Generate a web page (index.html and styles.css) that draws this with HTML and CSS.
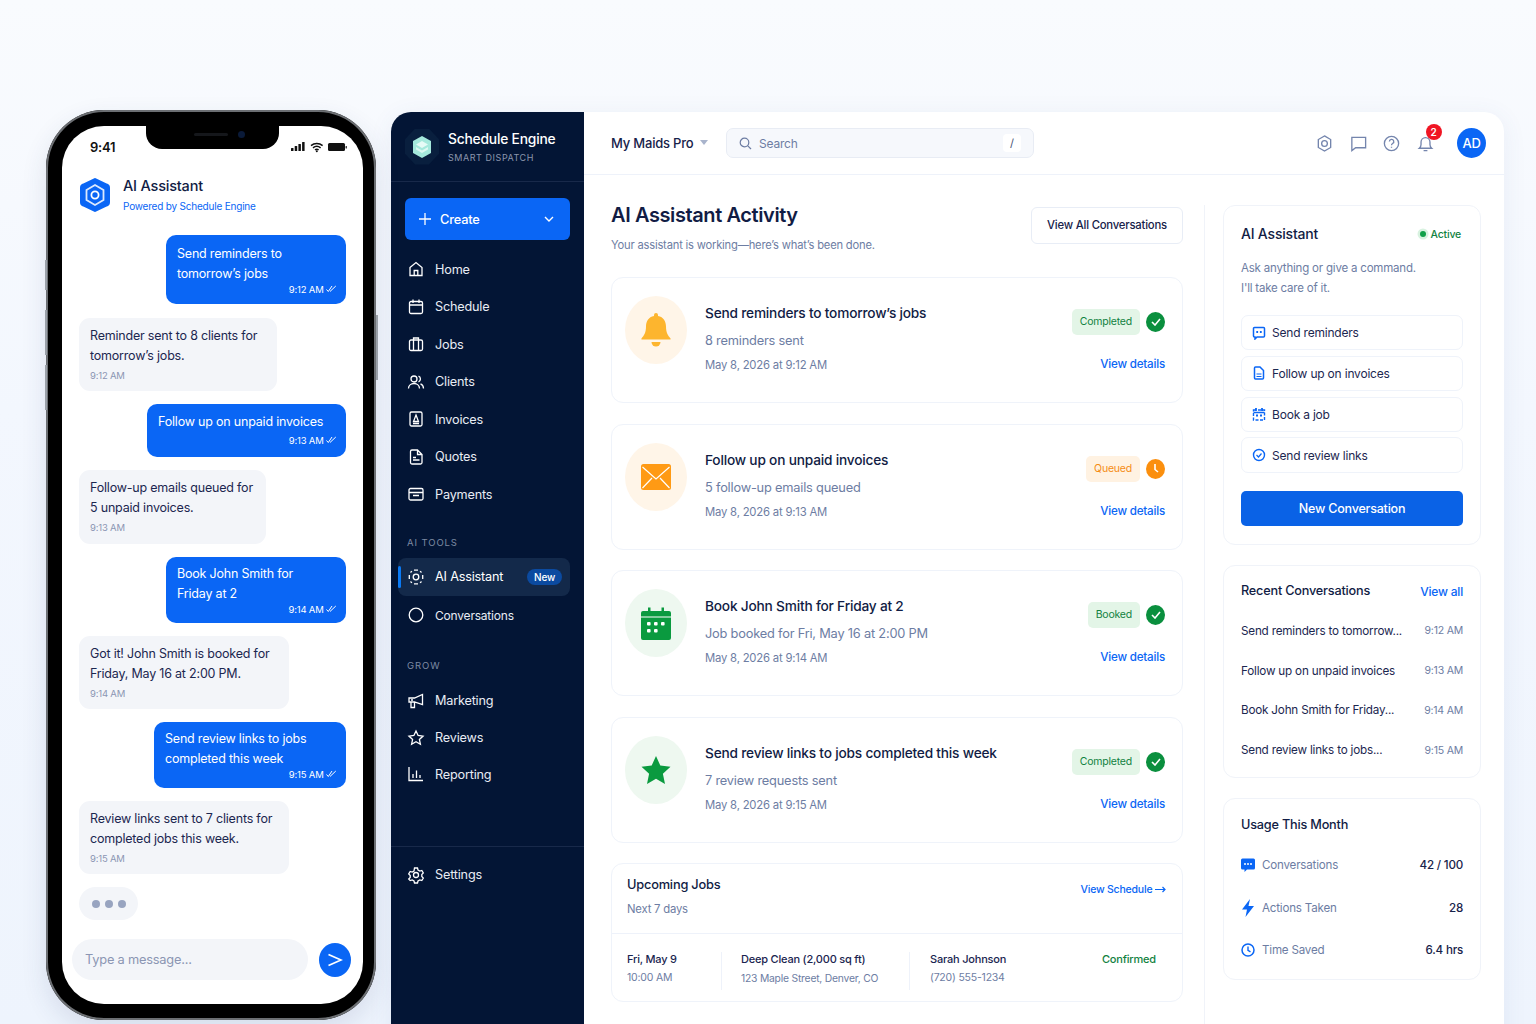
FILE: index.html
```html
<!DOCTYPE html>
<html lang="en">
<head>
<meta charset="utf-8">
<title>Schedule Engine - AI Assistant</title>
<link rel="stylesheet" href="styles.css">
</head>
<body>
<div class="phone">
  <span class="btn-side bs1"></span><span class="btn-side bs2"></span><span class="btn-side bs3"></span><span class="btn-side bs4"></span>
  <div class="screen">
    <div class="notch"><span class="speaker"></span><span class="cam"></span></div>
    <div class="status">
      <span class="clock">9:41</span>
      <svg class="status-icons" width="56" height="12" viewBox="0 0 56 12"><g fill="#111"><rect x="0" y="7" width="2.5" height="3" rx=".5"/><rect x="3.7" y="5" width="2.5" height="5" rx=".5"/><rect x="7.4" y="3" width="2.5" height="7" rx=".5"/><rect x="11.1" y="1" width="2.5" height="9" rx=".5"/><rect x="37" y="2" width="17" height="8" rx="1.5"/><rect x="54.6" y="5" width="1.2" height="2.4" rx=".5"/></g><path d="M20 4.6a9 9 0 0 1 11.6 0M22 6.8a6 6 0 0 1 7.6 0M24 8.9a3 3 0 0 1 3.6 0" fill="none" stroke="#111" stroke-width="1.5"/><circle cx="25.8" cy="10.3" r="1" fill="#111"/></svg>
    </div>
    <div class="p-head">
      <svg width="32" height="36" viewBox="0 0 32 36"><path d="M16 2.500l11.500 5.500a3 3 0 0 1 2 2.800v14.400a3 3 0 0 1-2 2.800L16 33.500 4.500 28a3 3 0 0 1-2-2.800V10.800a3 3 0 0 1 2-2.800z" fill="#0a66f5" stroke="#0a66f5" stroke-width="3" stroke-linejoin="round"/><path d="M16 8l8.500 5v10L16 28l-8.500-5V13z" fill="none" stroke="#fff" stroke-width="1.800" opacity=".85"/><circle cx="16" cy="18" r="3.600" fill="none" stroke="#fff" stroke-width="1.800"/></svg>
      <div class="p-head-t"><div class="p-title">AI Assistant</div><div class="p-sub">Powered by Schedule Engine</div></div>
    </div>
    <div class="chat">
      <div class="bub me h69 w180"><p>Send reminders to<br>tomorrow’s jobs</p><div class="stamp">9:12 AM <svg width="11" height="8" viewBox="0 0 11 8"><path d="M.5 4.500l1.800 2L6 1M4 6.500L9.800 1" fill="none" stroke="#fff" stroke-width="1"/></svg></div></div>
      <div class="bub ai h73 w198"><p>Reminder sent to 8 clients for<br>tomorrow’s jobs.</p><div class="stamp">9:12 AM</div></div>
      <div class="bub me h53 w199"><p>Follow up on unpaid invoices</p><div class="stamp">9:13 AM <svg width="11" height="8" viewBox="0 0 11 8"><path d="M.5 4.500l1.800 2L6 1M4 6.500L9.800 1" fill="none" stroke="#fff" stroke-width="1"/></svg></div></div>
      <div class="bub ai h74 w187"><p>Follow-up emails queued for<br>5 unpaid invoices.</p><div class="stamp">9:13 AM</div></div>
      <div class="bub me h66 w180"><p>Book John Smith for<br>Friday at 2</p><div class="stamp">9:14 AM <svg width="11" height="8" viewBox="0 0 11 8"><path d="M.5 4.500l1.800 2L6 1M4 6.500L9.800 1" fill="none" stroke="#fff" stroke-width="1"/></svg></div></div>
      <div class="bub ai h73 w210"><p>Got it! John Smith is booked for<br>Friday, May 16 at 2:00 PM.</p><div class="stamp">9:14 AM</div></div>
      <div class="bub me h66 w192"><p>Send review links to jobs<br>completed this week</p><div class="stamp">9:15 AM <svg width="11" height="8" viewBox="0 0 11 8"><path d="M.5 4.500l1.800 2L6 1M4 6.500L9.800 1" fill="none" stroke="#fff" stroke-width="1"/></svg></div></div>
      <div class="bub ai h73 w210"><p>Review links sent to 7 clients for<br>completed jobs this week.</p><div class="stamp">9:15 AM</div></div>
      <div class="typing"><i></i><i></i><i></i></div>
    </div>
    <div class="composer">
      <div class="msg-input">Type a message...</div>
      <div class="send"><svg width="16" height="14" viewBox="0 0 16 14"><path d="M1.500 1.500L14 7 1.500 12.500" fill="none" stroke="#fff" stroke-width="1.800"/></svg></div>
    </div>
  </div>
</div>

<div class="app">
  <aside class="side">
    <div class="brand">
      <div class="brand-mark"><svg width="20" height="24" viewBox="0 0 20 24"><path d="M10 1l9 5v12l-9 5-9-5V6z" fill="#a5e9dc"/><path d="M10 6l6 3.400L10 13 4 9.400z" fill="#e6fbf6"/><path d="M4 12l6 3.500 6-3.500v2.500L10 18l-6-3.500z" fill="#e6fbf6" opacity=".85"/></svg></div>
      <div><div class="brand-name">Schedule Engine</div><div class="brand-sub">SMART DISPATCH</div></div>
    </div>
    <div class="create"><svg width="14" height="14" viewBox="0 0 14 14"><path d="M7 1v12M1 7h12" stroke="#fff" stroke-width="1.300"/></svg><span>Create</span><svg class="chev" width="10" height="6" viewBox="0 0 10 6"><path d="M1 1l4 4 4-4" fill="none" stroke="#fff" stroke-width="1.400"/></svg></div>
    <nav class="nav first">
      <a class="nav-i"><svg viewBox="0 0 18 18"><path d="M3 7.500L9 2.500l6 5v8H3zM7.200 15.500v-5h3.600v5"/></svg>Home</a>
      <a class="nav-i"><svg viewBox="0 0 18 18"><rect x="2.500" y="3.500" width="13" height="12" rx="1.500"/><path d="M2.500 7h13M6 1.500v3.500M12 1.500v3.500"/></svg>Schedule</a>
      <a class="nav-i"><svg viewBox="0 0 18 18"><rect x="2.500" y="5" width="13" height="10.500" rx="1.500"/><path d="M6.500 15.500V3h5v12.500"/></svg>Jobs</a>
      <a class="nav-i"><svg viewBox="0 0 18 18"><circle cx="7" cy="6" r="3"/><path d="M1.500 15.500c0-3 2.500-5 5.500-5s5.500 2 5.500 5M11.500 3.200a3 3 0 0 1 0 5.600M13.500 10.800c1.800.7 3 2.300 3 4.700"/></svg>Clients</a>
      <a class="nav-i"><svg viewBox="0 0 18 18"><rect x="3" y="2" width="12" height="14" rx="1.500"/><path d="M9 5l2.500 6.500h-5zM6 13.500h6"/></svg>Invoices</a>
      <a class="nav-i"><svg viewBox="0 0 18 18"><path d="M3.500 3.500a1.500 1.500 0 0 1 1.500-1.500h5.500L15 6.500V14.500a1.500 1.500 0 0 1-1.500 1.500H5a1.500 1.500 0 0 1-1.500-1.500zM10.500 2v4.500H15M6 9.500h3M6 12h6.500"/></svg>Quotes</a>
      <a class="nav-i"><svg viewBox="0 0 18 18"><rect x="2" y="3.500" width="14" height="11.500" rx="1.500"/><path d="M2 7.500h14M6 10.500h6"/></svg>Payments</a>
    </nav>
    <div class="nav-head aitools">AI TOOLS</div>
    <nav class="nav">
      <a class="nav-i current"><svg viewBox="0 0 18 18"><circle cx="9" cy="9" r="2.800"/><path d="M7 2.200h4M7 15.800h4M2.300 7v4M15.700 7v4M3.500 4.500l1.400-1.400M13.100 3.100l1.400 1.400M3.500 13.500l1.400 1.400M13.100 14.900l1.400-1.400"/></svg>AI Assistant<span class="new">New</span></a>
      <a class="nav-i conv"><svg viewBox="0 0 18 18"><circle cx="9" cy="9" r="6.800"/></svg>Conversations</a>
    </nav>
    <div class="nav-head grow">GROW</div>
    <nav class="nav tight">
      <a class="nav-i"><svg viewBox="0 0 18 18"><path d="M2 6h5.500L15.500 2.500v10L7.500 10H2zM4 10v5.500h3.500V10M4 8h2"/></svg>Marketing</a>
      <a class="nav-i"><svg viewBox="0 0 18 18"><path d="M9 2l2.100 4.500 4.900.6-3.600 3.300 1 4.800L9 12.800l-4.400 2.400 1-4.800L2 7.100l4.900-.6z"/></svg>Reviews</a>
      <a class="nav-i"><svg viewBox="0 0 18 18"><path d="M2 2v13.500h14M6 13V9M9.500 13V5.500M13 13v-3"/></svg>Reporting</a>
    </nav>
    <div class="side-foot">
      <a class="nav-i"><svg viewBox="0 0 18 18"><circle cx="9" cy="9" r="2.500"/><path d="M7.500 2h3l.5 2 1.800 1 2-.6 1.500 2.600-1.500 1.500v2l1.500 1.500-1.500 2.600-2-.6-1.800 1-.5 2h-3l-.5-2-1.800-1-2 .6L1.700 13l1.500-1.500v-2L1.700 8l1.500-2.600 2 .6L7 5z"/></svg>Settings</a>
    </div>
  </aside>

  <div class="content">
    <header class="top">
      <div class="org">My Maids Pro <svg width="8" height="5" viewBox="0 0 8 5"><path d="M0 0h8L4 5z" fill="#a9b4cc"/></svg></div>
      <div class="search"><svg width="13" height="13" viewBox="0 0 13 13"><circle cx="5.500" cy="5.500" r="4.300" fill="none" stroke="#6d7da3" stroke-width="1.200"/><path d="M8.800 8.800L12 12" stroke="#6d7da3" stroke-width="1.200"/></svg><span>Search</span><kbd>/</kbd></div>
      <div class="top-icons">
        <svg class="ti" viewBox="0 0 20 20"><path d="M10 2l6.500 3.800v8.400L10 18l-6.500-3.800V5.800z"/><circle cx="10" cy="10" r="3"/></svg>
        <svg class="ti" viewBox="0 0 20 20"><path d="M3 3.500h14.500v11H7L3 17.500z"/></svg>
        <svg class="ti" viewBox="0 0 20 20"><circle cx="10" cy="10" r="7.500"/><path d="M7.800 8a2.300 2.300 0 1 1 3.400 2c-.8.500-1.200.9-1.200 1.800M10 13.500v1"/></svg>
        <div class="bell"><svg class="ti" viewBox="0 0 20 20"><path d="M3.500 15h13c-1.200-1-1.800-2-1.800-4V8.500a4.700 4.700 0 0 0-9.400 0V11c0 2-.6 3-1.800 4zM8 17.500h4"/></svg><span class="dot">2</span></div>
      </div>
      <div class="avatar">AD</div>
    </header>

    <div class="body">
      <main class="mid">
        <div class="mid-head">
          <div><h1>AI Assistant Activity</h1><p class="lead">Your assistant is working—here’s what’s been done.</p></div>
          <div class="btn-out">View All Conversations</div>
        </div>

        <article class="act">
          <div class="circ orange"><svg width="30" height="36" viewBox="0 0 30 36"><path d="M15 1a2 2 0 0 1 2 2v1c5.500 1 8 5.500 8 10.500 0 6 2 9 4.500 12a.6.6 0 0 1-.5 1H1a.6.6 0 0 1-.5-1C3 23.500 5 20.500 5 14.500 5 9.500 7.500 5 13 4V3a2 2 0 0 1 2-2z" fill="#fdb52e"/><path d="M10.500 30h9a4.500 4.500 0 0 1-9 0z" fill="#fdb52e"/></svg></div>
          <div class="act-t"><h3>Send reminders to tomorrow’s jobs</h3><p class="s1">8 reminders sent</p><p class="s2">May 8, 2026 at 9:12 AM</p></div>
          <div class="act-r"><div class="st"><span class="pill g">Completed</span><span class="stc gc"><svg width="10" height="8" viewBox="0 0 10 8"><path d="M1 4l3 3 5-6" fill="none" stroke="#fff" stroke-width="1.600"/></svg></span></div><a class="vd">View details</a></div>
        </article>

        <article class="act">
          <div class="circ orange"><svg width="30" height="26" viewBox="0 0 30 26"><rect width="30" height="26" rx="2.500" fill="#ff9a14"/><path d="M1.500 3L15 15 28.500 3M1.500 24l9.500-10M28.500 24L19 14" fill="none" stroke="#fff" stroke-width="1.200"/></svg></div>
          <div class="act-t"><h3>Follow up on unpaid invoices</h3><p class="s1">5 follow-up emails queued</p><p class="s2">May 8, 2026 at 9:13 AM</p></div>
          <div class="act-r"><div class="st"><span class="pill o">Queued</span><span class="stc oc"><svg width="10" height="11" viewBox="0 0 10 11"><path d="M4 1v5.500l3 2.500" fill="none" stroke="#fff" stroke-width="1.600"/></svg></span></div><a class="vd">View details</a></div>
        </article>

        <article class="act">
          <div class="circ green"><svg width="30" height="34" viewBox="0 0 30 34"><path d="M2 5h5V1.500h2.500V5h11V1.500H23V5h5a2 2 0 0 1 2 2v25a2 2 0 0 1-2 2H2a2 2 0 0 1-2-2V7a2 2 0 0 1 2-2z" fill="#0a9a3f"/><path d="M0 11h30" stroke="#fff" stroke-width="1"/><g fill="#fff"><rect x="6" y="16" width="3.600" height="3.600" rx="1"/><rect x="13" y="16" width="3.600" height="3.600" rx="1"/><rect x="20" y="16" width="3.600" height="3.600" rx="1"/><rect x="6" y="23" width="3.600" height="3.600" rx="1"/><rect x="13" y="23" width="3.600" height="3.600" rx="1"/></g></svg></div>
          <div class="act-t"><h3>Book John Smith for Friday at 2</h3><p class="s1">Job booked for Fri, May 16 at 2:00 PM</p><p class="s2">May 8, 2026 at 9:14 AM</p></div>
          <div class="act-r"><div class="st"><span class="pill g">Booked</span><span class="stc gc"><svg width="10" height="8" viewBox="0 0 10 8"><path d="M1 4l3 3 5-6" fill="none" stroke="#fff" stroke-width="1.600"/></svg></span></div><a class="vd">View details</a></div>
        </article>

        <article class="act">
          <div class="circ green"><svg width="30" height="30" viewBox="0 0 30 30"><path d="M15 1l4.300 9.500 10.200 1.200-7.600 7 2.100 10.300L15 23.700 6 29l2.100-10.300-7.600-7 10.200-1.200z" fill="#0a9a3f"/></svg></div>
          <div class="act-t"><h3>Send review links to jobs completed this week</h3><p class="s1">7 review requests sent</p><p class="s2">May 8, 2026 at 9:15 AM</p></div>
          <div class="act-r"><div class="st"><span class="pill g">Completed</span><span class="stc gc"><svg width="10" height="8" viewBox="0 0 10 8"><path d="M1 4l3 3 5-6" fill="none" stroke="#fff" stroke-width="1.600"/></svg></span></div><a class="vd">View details</a></div>
        </article>

        <section class="up">
          <div class="up-head">
            <div><h3>Upcoming Jobs</h3><p class="up-sub">Next 7 days</p></div>
            <a class="vs">View Schedule <svg width="11" height="7" viewBox="0 0 11 7"><path d="M0 3.500h10M7.500 1L10 3.500 7.500 6" fill="none" stroke="#0a66f5" stroke-width="1.200"/></svg></a>
          </div>
          <div class="up-row">
            <div class="uc c1"><b>Fri, May 9</b><span>10:00 AM</span></div>
            <div class="uc c2"><b>Deep Clean (2,000 sq ft)</b><span>123 Maple Street, Denver, CO</span></div>
            <div class="uc c3"><b>Sarah Johnson</b><span>(720) 555-1234</span></div>
            <div class="conf">Confirmed</div>
          </div>
        </section>
      </main>

      <aside class="right">
        <section class="panel p1">
          <div class="ph"><h2>AI Assistant</h2><span class="live"><i></i>Active</span></div>
          <p class="desc">Ask anything or give a command.<br>I'll take care of it.</p>
          <div class="quick">
            <div class="q"><svg viewBox="0 0 14 14" class="qi"><path d="M1.500 2.500a1 1 0 0 1 1-1h9a1 1 0 0 1 1 1v7.500a1 1 0 0 1-1 1H5L3 13v-2h-.5a1 1 0 0 1-1-1z" fill="none" stroke="#0a66f5" stroke-width="1.500"/><rect x="4.300" y="5" width="1.800" height="2" fill="#0a66f5"/><rect x="7.900" y="5" width="1.800" height="2" fill="#0a66f5"/></svg>Send reminders</div>
            <div class="q"><svg viewBox="0 0 14 14" class="qi"><path d="M2.500 2a1 1 0 0 1 1-1H8l3.500 3.500V12a1 1 0 0 1-1 1h-7a1 1 0 0 1-1-1z" fill="none" stroke="#0a66f5" stroke-width="1.500"/><path d="M4.500 8h5M4.500 10.500h5" stroke="#0a66f5" stroke-width="1.200"/></svg>Follow up on invoices</div>
            <div class="q"><svg viewBox="0 0 14 14" class="qi"><path d="M4 1v3M10 1v3M1.500 3h11v10h-11z" fill="none" stroke="#0a66f5" stroke-width="1.400" stroke-dasharray="3 1.500"/><path d="M4 1v3M10 1v3M1.500 5.500h11" stroke="#0a66f5" stroke-width="1.300"/><rect x="4" y="7.500" width="2" height="2" fill="#0a66f5"/><rect x="8" y="7.500" width="2" height="2" fill="#0a66f5"/></svg>Book a job</div>
            <div class="q"><svg viewBox="0 0 14 14" class="qi"><circle cx="7" cy="7" r="5.500" fill="none" stroke="#0a66f5" stroke-width="1.400"/><path d="M4.500 7l2 2 3-3.500" fill="none" stroke="#0a66f5" stroke-width="1.200"/></svg>Send review links</div>
          </div>
          <div class="btn-new">New Conversation</div>
        </section>

        <section class="panel p2">
          <div class="ph2"><h2>Recent Conversations</h2><a>View all</a></div>
          <div class="rc"><span>Send reminders to tomorrow...</span><em>9:12 AM</em></div>
          <div class="rc"><span>Follow up on unpaid invoices</span><em>9:13 AM</em></div>
          <div class="rc"><span>Book John Smith for Friday...</span><em>9:14 AM</em></div>
          <div class="rc"><span>Send review links to jobs...</span><em>9:15 AM</em></div>
        </section>

        <section class="panel p3">
          <h2>Usage This Month</h2>
          <div class="us"><svg viewBox="0 0 14 14" class="qi"><path d="M0 2a1.500 1.500 0 0 1 1.500-1.500h11A1.500 1.500 0 0 1 14 2v8a1.500 1.500 0 0 1-1.500 1.500H6L3.500 14v-2.500h-2A1.500 1.500 0 0 1 0 10z" fill="#0a66f5"/><g fill="#fff"><circle cx="4" cy="6" r="1"/><circle cx="7" cy="6" r="1"/><circle cx="10" cy="6" r="1"/></g></svg><span>Conversations</span><b>42 / 100</b></div>
          <div class="us"><svg viewBox="0 0 14 18" class="qi tall"><path d="M9 0L1 10.500h5L4.500 18 13 7H7.500z" fill="#0a66f5"/></svg><span>Actions Taken</span><b>28</b></div>
          <div class="us"><svg viewBox="0 0 14 14" class="qi"><circle cx="7" cy="7" r="6" fill="none" stroke="#0a66f5" stroke-width="1.500"/><path d="M7 3.500V7.300l2.500 1.500" fill="none" stroke="#0a66f5" stroke-width="1.400"/></svg><span>Time Saved</span><b>6.4 hrs</b></div>
        </section>
      </aside>
    </div>
  </div>
</div>
</body>
</html>
```

FILE: styles.css
```css
* { box-sizing: border-box; }
html, body { margin: 0; height: 1024px; }
body {
  display: flex; align-items: flex-start; overflow: hidden;
  padding: 110px 0 0 46px;
  font-family: Inter, "Liberation Sans", sans-serif;
  font-size: 12.500px; color: #17224a; letter-spacing: -.2px;
  background: linear-gradient(180deg, #f9fbfe 0, #f3f7fe 40%, #eef4fd 100%);
}
h1, h2, h3, p { margin: 0; }
a { color: inherit; }

/* Phone */
.phone {
  position: relative; flex: none; width: 330px; height: 910px; padding: 16px 13px 16px 16px;
  border-radius: 58px; background: #000;
  box-shadow: inset 0 0 0 2px #6c6f73, 0 10px 26px rgba(40,60,110,.12);
}
.btn-side { position: absolute; width: 2px; background: #9aa0a8; }
.bs1 { left: -1px; top: 150px; height: 30px; }
.bs2 { left: -1px; top: 200px; height: 45px; }
.bs3 { left: -1px; top: 255px; height: 45px; }
.bs4 { right: -2px; top: 205px; height: 65px; }
.screen {
  position: relative; height: 878px; background: #fff; border-radius: 42px; overflow: hidden;
  display: flex; flex-direction: column;
}
.notch {
  position: absolute; left: 84px; top: 0; width: 133px; height: 23px; background: #000;
  border-radius: 0 0 16px 16px; display: flex; justify-content: center; align-items: center; gap: 10px; padding: 0 0 6px 14px;
}
.speaker { width: 34px; height: 3px; border-radius: 2px; background: #15171b; }
.cam { width: 7px; height: 7px; border-radius: 50%; background: #0a1a38; }
.status { display: flex; justify-content: space-between; align-items: center; height: 20px; margin-top: 11px; padding: 0 16px 0 28px; }
.clock { font-weight: 600; font-size: 13px; color: #111; }
.status-icons { display: block; }
.p-head { display: flex; align-items: center; gap: 12px; margin-top: 19px; padding-left: 17px; height: 37px; }
.p-head svg { flex: none; width: 32px; height: 36px; }
.p-title { font-size: 14.500px; font-weight: 500; color: #111c44; line-height: 18px; }
.p-sub { font-size: 10px; color: #0a66f5; line-height: 14px; margin-top: 4px; }
.chat { display: flex; flex-direction: column; gap: 13px; margin-top: 22px; padding: 0 17px; }
.bub { padding: 8px 11px 0; border-radius: 11px; font-size: 12.500px; line-height: 20px; }
.bub p { margin: 0; }
.me { align-self: flex-end; background: #0a66f5; color: #fff; border-radius: 10px; }
.ai { align-self: flex-start; background: #f3f5f9; color: #1c2750; }
.h69 { height: 69px; padding-top: 9px; margin-bottom: 1px; }
.h73 { height: 73px; }
.h53 { height: 53px; padding-top: 8px; }
.h74 { height: 74px; }
.h66 { height: 66px; padding-top: 7px; }
.w180 { width: 180px; } .w198 { width: 198px; } .w199 { width: 199px; } .w187 { width: 187px; } .w210 { width: 210px; } .w192 { width: 192px; }
.stamp { font-size: 9.500px; line-height: 12px; margin-top: 4px; color: #8b96b3; letter-spacing: -.2px; }
.me .stamp { text-align: right; color: #fff; margin-right: -2px; }
.h69 .stamp { margin-top: 0; }
.h53 .stamp { margin-top: 3px; }
.h66 .stamp { margin-top: 0; }
.typing { align-self: flex-start; display: flex; align-items: center; gap: 5px; width: 59px; height: 33px; padding-left: 13px; border-radius: 17px; background: #f3f5f9; }
.typing i { width: 8px; height: 8px; border-radius: 50%; background: #98a4c0; }
.composer { display: flex; align-items: center; gap: 11px; margin-top: 19px; padding-left: 10px; }
.msg-input { width: 236px; height: 41px; padding-left: 13px; border-radius: 21px; background: #f3f5f9; color: #8b96b3; font-size: 12.800px; line-height: 41px; }
.send { width: 32px; height: 34px; border-radius: 50%; background: #0a66f5; display: flex; align-items: center; justify-content: center; }

/* App */
.app {
  flex: none; display: flex; width: 1113px; height: 960px; margin: 2px 0 0 15px;
  background: #fff; border-radius: 20px; overflow: hidden;
  box-shadow: 0 4px 24px rgba(60,90,150,.08);
}
.side { flex: none; width: 193px; display: flex; flex-direction: column; background: #031535; color: #f0f3f9; }
.brand { display: flex; align-items: center; gap: 9px; height: 70px; padding: 0 0 0 14px; border-bottom: 1px solid #18294a; }
.brand-mark { width: 34px; height: 36px; display: flex; align-items: center; justify-content: center; background: #091f3e; clip-path: polygon(30% 0, 70% 0, 100% 30%, 100% 70%, 70% 100%, 30% 100%, 0 70%, 0 30%); }
.brand-name { font-size: 13.800px; font-weight: 500; color: #fff; line-height: 18px; margin-top: 1px; }
.brand-sub { font-size: 9px; letter-spacing: .55px; color: #8b96ad; line-height: 12px; margin-top: 4px; }
.create { display: flex; align-items: center; gap: 8px; margin: 16px 14px 0; height: 42px; padding: 0 16px 0 13px; border-radius: 6px; background: #0a66f5; color: #fff; font-size: 12.800px; font-weight: 500; }
.chev { margin-left: auto; }
.nav { display: flex; flex-direction: column; padding: 0 14px 0 7px; }
.nav.first { margin-top: 10.500px; }
.nav-i { display: flex; align-items: center; gap: 10px; height: 37.500px; padding-left: 9px; border-radius: 8px; font-size: 12.700px; color: #e8ecf4; }
.nav-i svg { flex: none; width: 18px; height: 18px; fill: none; stroke: #fff; stroke-width: 1.300; }
.nav-head { padding-left: 16px; font-size: 9.500px; letter-spacing: .9px; color: #7d8aa3; line-height: 12px; }
.aitools { margin-top: 24px; margin-bottom: 9px; }
.current { position: relative; background: #13294a; color: #fff; }
.current::before { content: ""; position: absolute; left: 0; top: 8px; bottom: 8px; width: 3px; border-radius: 2px; background: #0a7af5; }
.conv { margin-top: 1px; font-size: 12px; }
.new { margin-left: auto; margin-right: 8px; padding: 0 7px; height: 16px; line-height: 16px; border-radius: 9px; background: #0b4aa0; color: #fff; font-size: 10px; font-weight: 500; }
.grow { margin-top: 25.500px; margin-bottom: 11px; }
.tight .nav-i { height: 36.800px; }
.side-foot { margin-top: 53px; padding: 9px 14px 0 7px; border-top: 1px solid #18294a; }

.content { flex: 1; display: flex; flex-direction: column; min-width: 0; }
.top { flex: none; display: flex; align-items: center; height: 63px; padding: 0 18px 0 27px; border-bottom: 1px solid #eef2fa; }
.org { display: flex; align-items: center; gap: 6px; width: 115px; font-size: 13px; font-weight: 500; color: #17224a; margin-top: -1px; }
.search { display: flex; align-items: center; gap: 7px; width: 308px; height: 30px; padding: 0 12px; border: 1px solid #e8ecf4; border-radius: 7px; background: #f6f8fc; color: #6d7da3; font-size: 12px; }
.search kbd { margin-left: auto; width: 18px; height: 18px; text-align: center; border-radius: 4px; background: #fff; font: 11px/18px Inter, sans-serif; color: #444f73; }
.top-icons { display: flex; align-items: center; gap: 14.500px; margin-left: auto; margin-right: 22.500px; }
.ti { display: block; width: 19px; height: 19px; fill: none; stroke: #7485ad; stroke-width: 1.400; }
.bell { position: relative; }
.dot { position: absolute; top: -10px; left: 10px; width: 16px; height: 16px; border-radius: 50%; background: #f01523; color: #fff; font-size: 10px; font-weight: 600; line-height: 16px; text-align: center; }
.avatar { width: 29px; height: 30px; border-radius: 50%; background: #0a66f5; color: #fff; font-size: 13px; font-weight: 500; line-height: 30px; text-align: center; }

.body { flex: 1; display: flex; min-height: 0; padding: 29px 23px 0 27px; }
.mid { flex: none; width: 572px; display: flex; flex-direction: column; }
.mid-head { display: flex; justify-content: space-between; align-items: flex-start; height: 70px; margin-top: 3px; }
h1 { font-size: 20px; font-weight: 600; color: #111c44; line-height: 26px; letter-spacing: -.4px; margin-top: -5px; }
.lead { margin-top: 9px; font-size: 11.200px; color: #6d7da3; line-height: 16px; }
.btn-out { height: 37px; width: 152px; text-align: center; border: 1px solid #e8edf6; border-radius: 6px; line-height: 35px; font-size: 11.300px; font-weight: 500; color: #17224a; background: #fff; }
.act { display: grid; grid-template-columns: 62px 1fr auto; column-gap: 18px; height: 126px; margin-bottom: 20.500px; padding: 18px 17px 0 13px; border: 1px solid #eff3fa; border-radius: 12px; background: #fff; }
.circ { width: 62px; height: 68px; border-radius: 50%; display: flex; align-items: center; justify-content: center; }
.orange { background: #fff5e8; }
.green { background: #eef8f0; }
.act-t h3 { margin-top: 8px; font-size: 13.700px; font-weight: 500; color: #111c44; line-height: 18px; }
.s1 { margin-top: 10px; font-size: 12.800px; color: #6d7da3; line-height: 18px; }
.s2 { margin-top: 6px; font-size: 11.300px; color: #6d7da3; line-height: 18px; }
.act-r { display: flex; flex-direction: column; align-items: flex-end; }
.st { display: flex; align-items: center; gap: 6px; margin-top: 13px; }
.pill { height: 26px; padding: 0 8px; border-radius: 5px; line-height: 26px; font-size: 10.500px; }
.pill.g { background: #e3f5e7; color: #11823f; }
.pill.o { background: #fff2e2; color: #f58c14; }
.stc { width: 19px; height: 20px; border-radius: 50%; display: flex; align-items: center; justify-content: center; }
.gc { background: #0a8f3e; }
.oc { background: #fb8f0e; }
.vd { margin-top: 20px; font-size: 11.600px; font-weight: 500; color: #0a66f5; line-height: 18px; }
.up { height: 139px; border: 1px solid #eff3fa; border-radius: 12px; background: #fff; }
.up-head { display: flex; justify-content: space-between; height: 70px; padding: 12px 16px 0 15px; border-bottom: 1px solid #eef2fa; }
.up-head h3 { font-size: 12.800px; font-weight: 500; color: #111c44; line-height: 18px; }
.up-sub { margin-top: 7px; font-size: 11.300px; color: #6d7da3; line-height: 16px; }
.vs { margin-top: 7px; font-size: 10.500px; font-weight: 500; color: #0a66f5; line-height: 14px; }
.up-row { display: flex; padding: 18px 0 0 15px; }
.uc { display: flex; flex-direction: column; gap: 5px; height: 38px; border-right: 1px solid #eef2fa; }
.uc b { font-weight: 500; font-size: 11px; line-height: 14px; color: #1a2550; }
.uc span { font-size: 10.500px; line-height: 14px; color: #6d7da3; }
.c1 { width: 95px; }
.c2 { width: 188px; padding-left: 19px; }
.c2 span { font-size: 10.300px; }
.c3 { width: 172px; padding-left: 20px; border-right: 0; }
.conf { margin-left: 20px; font-size: 11px; font-weight: 500; color: #11823f; line-height: 14px; }

.right { flex: none; width: 279px; margin: 1px 0 0 21px; padding-left: 18px; border-left: 1px solid #f0f3f9; display: flex; flex-direction: column; gap: 20px; }
.panel { width: 258px; padding: 0 17px; border: 1px solid #f0f3f9; border-radius: 12px; background: #fff; }
.panel h2 { font-size: 12.700px; font-weight: 500; color: #111c44; line-height: 18px; }
.p1 { height: 340px; padding-top: 19px; }
.p2 { height: 213px; padding-top: 16px; }
.p3 { height: 182px; padding-top: 17px; }
.ph { display: flex; justify-content: space-between; align-items: center; margin-right: 2px; }
.panel .ph h2 { font-size: 14px; }
.live { display: flex; align-items: center; gap: 5px; font-size: 10.500px; font-weight: 500; color: #11823f; }
.live i { width: 6px; height: 6px; border-radius: 50%; background: #11a04a; box-shadow: 0 0 0 2.500px #d8f2e0; }
.desc { margin-top: 15px; font-size: 11.500px; line-height: 20px; color: #6d7da3; }
.quick { display: flex; flex-direction: column; gap: 5.500px; margin-top: 17px; }
.q { display: flex; align-items: center; gap: 6px; height: 35.300px; padding-left: 10px; border: 1px solid #eff3fa; border-radius: 7px; font-size: 12px; color: #1c2750; }
.qi { flex: none; width: 14px; height: 14px; }
.qi.tall { height: 18px; }
.btn-new { margin-top: 18px; height: 35px; border-radius: 5px; background: #0a62e6; color: #fff; text-align: center; line-height: 35px; font-size: 12.500px; font-weight: 500; }
.ph2 { display: flex; justify-content: space-between; align-items: center; margin-bottom: 11px; }
.ph2 a { font-size: 12px; font-weight: 500; color: #0a66f5; }
.rc { display: flex; justify-content: space-between; align-items: center; height: 39.800px; font-size: 11.700px; color: #1c2750; }
.rc em { font-style: normal; font-size: 10.500px; color: #6d7da3; }
.us { display: flex; align-items: center; gap: 7px; height: 42.700px; font-size: 11.600px; color: #6d7da3; }
.p3 h2 { margin-bottom: 9.500px; }
.us b { margin-left: auto; font-weight: 500; color: #17224a; font-size: 11.600px; }
```
